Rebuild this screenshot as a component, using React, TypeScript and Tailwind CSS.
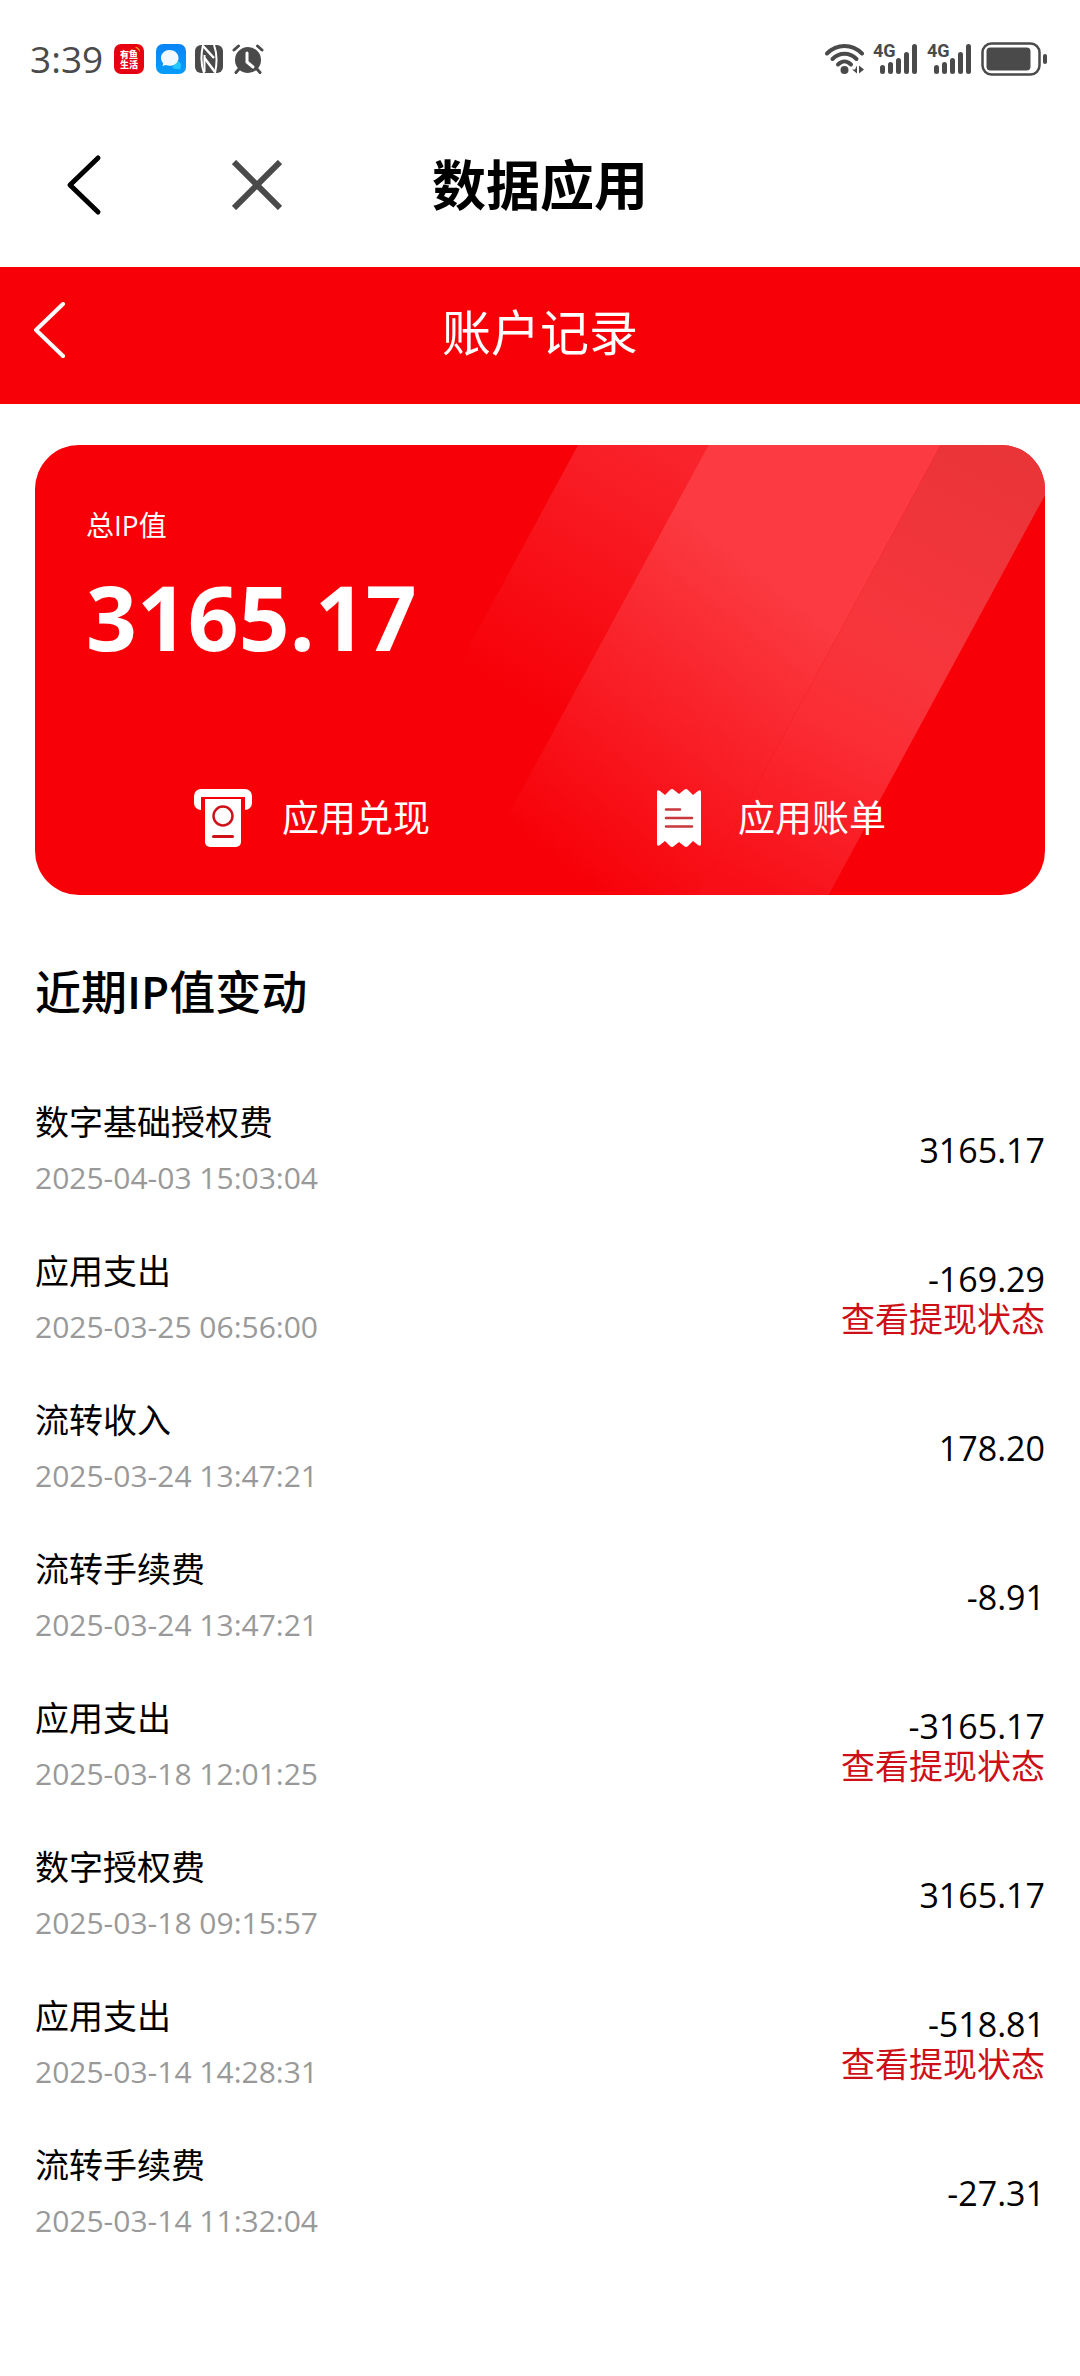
interface RecordItem {
  title: string;
  time: string;
  amount: string;
  withdraw?: boolean;
}

const records: RecordItem[] = [
  { title: "数字基础授权费", time: "2025-04-03 15:03:04", amount: "3165.17" },
  { title: "应用支出", time: "2025-03-25 06:56:00", amount: "-169.29", withdraw: true },
  { title: "流转收入", time: "2025-03-24 13:47:21", amount: "178.20" },
  { title: "流转手续费", time: "2025-03-24 13:47:21", amount: "-8.91" },
  { title: "应用支出", time: "2025-03-18 12:01:25", amount: "-3165.17", withdraw: true },
  { title: "数字授权费", time: "2025-03-18 09:15:57", amount: "3165.17" },
  { title: "应用支出", time: "2025-03-14 14:28:31", amount: "-518.81", withdraw: true },
  { title: "流转手续费", time: "2025-03-14 11:32:04", amount: "-27.31" },
];

function SignalIcon() {
  return (
    <svg width="46" height="44" viewBox="0 -6 46 44" fill="#4a4a4a" aria-hidden="true">
      <text x="0" y="14" fontSize="18" fontWeight="700" className="font-['Roboto',sans-serif]">
        4G
      </text>
      <rect x="7" y="22" width="5" height="9" rx="2.5" />
      <rect x="15" y="19" width="5" height="12" rx="2.5" />
      <rect x="23" y="15" width="5" height="16" rx="2.5" />
      <rect x="31" y="9" width="5" height="22" rx="2.5" />
      <rect x="39" y="1" width="5" height="30" rx="2.5" />
    </svg>
  );
}

function StatusBar() {
  return (
    <div className="flex h-[118px] items-center justify-between pl-[30px] pr-8 text-[#4a4a4a]">
      <div className="flex items-center">
        <span className="mr-[11px] text-[37px] leading-[40px]">3:39</span>

        <svg width="30" height="30" viewBox="0 0 30 30" className="mr-3" aria-hidden="true">
          <rect width="30" height="30" rx="7" fill="#e60012" />
          <path d="M21 3c3 0 5 2 5 5-1-2-3-3-5-5z" fill="#f5a623" />
          <g fill="#fff" fontSize="9" fontWeight="900" className="font-['Noto_Sans_CJK_SC',sans-serif]">
            <text x="6" y="14">有鱼</text>
            <text x="6" y="24">生活</text>
          </g>
        </svg>

        <svg width="30" height="30" viewBox="0 0 30 30" className="mr-[9px]" aria-hidden="true">
          <defs>
            <linearGradient id="chatBg" x1="0" y1="0" x2="0" y2="1">
              <stop offset="0" stopColor="#0a84f5" />
              <stop offset="1" stopColor="#069dfb" />
            </linearGradient>
          </defs>
          <rect width="30" height="30" rx="7" fill="url(#chatBg)" />
          <path d="M19 17a5 4 0 0 1 6 4c0 1-.4 2-.8 2.500l.8 2-3-.7c-2 .5-4 .2-5.500-1z" fill="#25c8fb" />
          <path d="M13.500 6C9 6 5 9.500 5 14c0 2 1 4 2.200 5.300L6.500 22l3.500-1c1 .6 2.200.8 3.500.8 5 0 9-3.300 9-7.800S18.500 6 13.500 6z" fill="#f1f9ff" />
        </svg>

        <svg width="28" height="28" viewBox="0 0 28 28" className="mr-[9px]" fill="none" stroke="#fff" aria-hidden="true">
          <rect width="28" height="28" rx="6" fill="#4a4a4a" stroke="none" />
          <path d="M9 28C6 20 6 9 8 0" strokeWidth="2" />
          <path d="M19 0c3 8 3 19 1 28" strokeWidth="2" />
          <path d="M8 1l11 12M9.500 13L20 27" strokeWidth="2.500" />
          <path d="M9.500 10v17" strokeWidth="2" />
        </svg>

        <svg width="32" height="30" viewBox="0 0 32 30" fill="none" stroke="#4a4a4a" strokeLinecap="round" aria-hidden="true">
          <circle cx="16" cy="16" r="13" fill="#4a4a4a" stroke="none" />
          <path d="M2 6l4.500-4M30 6l-4.500-4M7 25l-3 3.500M25 25l3 3.500" strokeWidth="3" />
          <path d="M15 9v9l6 5" stroke="#fff" strokeWidth="3" />
        </svg>
      </div>

      <div className="flex items-center">
        <svg width="40" height="32" viewBox="0 0 40 32" className="mr-2" fill="none" stroke="#4a4a4a" strokeWidth="4" strokeLinecap="round" aria-hidden="true">
          <path d="M2 10.500C12 .5 27 .5 37 10.500" />
          <path d="M7.500 16C14.500 9 24.500 9 31.500 16" />
          <path d="M13 21.500c4-4 9-4 13 0" />
          <circle cx="19.500" cy="27" r="4" fill="#4a4a4a" stroke="none" />
          <path d="M32 22.500v8l-5-4h3zM34 22.500v8l5-4z" fill="#4a4a4a" stroke="none" />
        </svg>
        <span className="mr-2">
          <SignalIcon />
        </span>
        <span className="mr-2">
          <SignalIcon />
        </span>
        <svg width="67" height="34" viewBox="0 0 67 34" fill="none" aria-hidden="true">
          <rect x="1.500" y="1.500" width="57" height="31" rx="9" stroke="#4a4a4a" strokeWidth="2.500" />
          <rect x="5.500" y="5.500" width="44" height="23" rx="4" fill="#4a4a4a" />
          <rect x="62" y="12" width="4" height="10" rx="2" fill="#4a4a4a" />
        </svg>
      </div>
    </div>
  );
}

function AppHeader() {
  return (
    <header className="grid h-[149px] grid-cols-[1fr_auto_1fr] items-center pb-4">
      <div className="flex items-center gap-[128px] pl-16">
        <button type="button" aria-label="返回">
          <svg width="40" height="64" viewBox="0 0 40 64" fill="none" stroke="#000" strokeWidth="5" strokeLinecap="round" strokeLinejoin="round">
            <path d="M34 5L6 32l28 27" />
          </svg>
        </button>
        <button type="button" aria-label="关闭">
          <svg width="50" height="50" viewBox="0 0 50 50" fill="none" stroke="#4a4a4a" strokeWidth="6">
            <path d="M2 2l46 46M48 2L2 48" />
          </svg>
        </button>
      </div>
      <h1 className="text-[54px] font-bold leading-[64px] text-black">数据应用</h1>
    </header>
  );
}

function PageBar() {
  return (
    <nav className="grid h-[137px] grid-cols-[1fr_auto_1fr] items-center bg-[#f70008] px-8 pb-2 text-white">
      <button type="button" aria-label="返回" className="justify-self-start">
        <svg width="36" height="60" viewBox="0 0 36 60" fill="none" stroke="#fff" strokeWidth="4" strokeLinecap="round" strokeLinejoin="round">
          <path d="M31 2L4 28l27 26" />
        </svg>
      </button>
      <h2 className="text-[49px] leading-[64px]">账户记录</h2>
    </nav>
  );
}

function CardStripes() {
  return (
    <svg className="absolute inset-0 h-full w-full" viewBox="0 0 1008 450" preserveAspectRatio="none" aria-hidden="true">
      <defs>
        <linearGradient id="stripeLeft" gradientUnits="userSpaceOnUse" x1="620" y1="0" x2="470" y2="250">
          <stop offset="0" stopColor="#f9232b" />
          <stop offset="1" stopColor="#f70008" />
        </linearGradient>
        <linearGradient id="stripeMiddle" gradientUnits="userSpaceOnUse" x1="740" y1="140" x2="520" y2="420">
          <stop offset="0" stopColor="#fb3a41" />
          <stop offset="1" stopColor="#f70008" />
        </linearGradient>
        <linearGradient id="stripeRight" gradientUnits="userSpaceOnUse" x1="960" y1="0" x2="720" y2="450">
          <stop offset="0" stopColor="#e93438" />
          <stop offset="0.450" stopColor="#f7363c" />
          <stop offset="0.650" stopColor="#fb2c34" />
          <stop offset="1" stopColor="#f80e16" />
        </linearGradient>
      </defs>
      <path d="M542 0h130L429 450H299z" fill="url(#stripeLeft)" />
      <path d="M672 0h232L661 450H429z" fill="url(#stripeMiddle)" />
      <path d="M904 0h131L792 450H661z" fill="url(#stripeRight)" />
    </svg>
  );
}

function CashIcon() {
  return (
    <svg width="58" height="58" viewBox="0 0 58 58" aria-hidden="true">
      <path d="M7 0h44a7 7 0 0 1 7 7v7a7 7 0 0 1-7 7V8H7v13a7 7 0 0 1-7-7V7a7 7 0 0 1 7-7z" fill="#fff" />
      <path d="M11 10h36v43a5 5 0 0 1-5 5H16a5 5 0 0 1-5-5z" fill="#fff" />
      <circle cx="29" cy="27" r="9.500" fill="none" stroke="#cf1219" strokeWidth="2.500" />
      <path d="M19.500 47.500h19" stroke="#cf1219" strokeWidth="3" strokeLinecap="round" />
    </svg>
  );
}

function BillIcon() {
  return (
    <svg width="58" height="58" viewBox="0 0 58 58" aria-hidden="true">
      <path
        d="M7 3q0-3 3-1l5 4 5-5q2-2 4 0l5 4 5-4q2-2 4 0l5 5 5-4q3-2 3 1v52q0 3-3 1l-5-4-5 5q-2 2-4 0l-5-4-5 4q-2 2-4 0l-5-5-5 4q-3 2-3-1z"
        fill="#fff"
      />
      <path d="M16 20.500h14M16 29h26M16 37.500h26" stroke="#c8373c" strokeWidth="2.500" strokeLinecap="round" />
    </svg>
  );
}

function BalanceCard() {
  return (
    <section className="relative overflow-hidden rounded-[44px] bg-[#f70008] px-[51px] pb-[45px] pt-[60px] text-white">
      <CardStripes />
      <div className="relative">
        <p className="text-[28px] leading-[40px]">总IP值</p>
        <p className="mt-4 text-[89px] font-bold leading-[112px]">3165.17</p>
        <div className="mt-[113px] grid grid-cols-2 gap-x-1">
          <button type="button" className="flex items-center justify-center gap-[30px] text-[37px] leading-[64px]">
            <CashIcon />
            应用兑现
          </button>
          <button type="button" className="flex items-center justify-center gap-[30px] text-[37px] leading-[64px]">
            <BillIcon />
            应用账单
          </button>
        </div>
      </div>
    </section>
  );
}

function RecordRow({ item }: { item: RecordItem }) {
  return (
    <li className="flex items-center justify-between">
      <div>
        <p className="text-[34px] leading-[56px] text-black">{item.title}</p>
        <p className="text-[30px] leading-[56px] text-[#999999]">{item.time}</p>
      </div>
      <div className="flex flex-col items-end text-[34px] leading-[40px]">
        <span className="text-black">{item.amount}</span>
        {item.withdraw && (
          <a href="#withdraw" className="text-[#cd1017]">
            查看提现状态
          </a>
        )}
      </div>
    </li>
  );
}

export default function App() {
  return (
    <div className="min-h-screen bg-white font-['Open_Sans','Noto_Sans_CJK_SC',sans-serif]">
      <StatusBar />
      <AppHeader />
      <PageBar />
      <main className="px-[35px] pt-[41px]">
        <BalanceCard />
        <h3 className="mt-16 text-[46px] font-medium leading-[64px] text-black">
          近期<span className="font-semibold">IP</span>值变动
        </h3>
        <ul className="mt-[71px] flex flex-col gap-[37px] pb-16">
          {records.map((item) => (
            <RecordRow key={item.time + item.title} item={item} />
          ))}
        </ul>
      </main>
    </div>
  );
}
